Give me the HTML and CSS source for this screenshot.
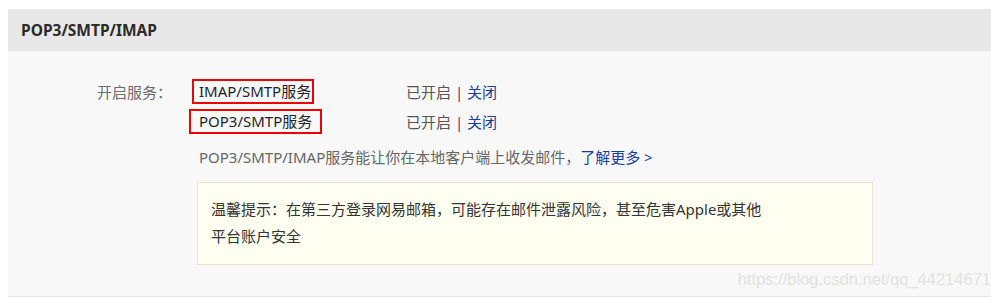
FILE: index.html
```html
<!DOCTYPE html>
<html lang="zh-CN">
<head>
<meta charset="utf-8">
<title>POP3/SMTP/IMAP</title>
<link rel="stylesheet" href="styles.css">
</head>
<body>
<div class="panel">
  <div class="panel-head">POP3/SMTP/IMAP</div>
  <div class="panel-body">
    <div class="row">
      <div class="label">开启服务：</div>
      <div class="service"><span class="svc svc-imap">IMAP/SMTP服务</span></div>
      <div class="status">已开启 <span class="sep">|</span> <a class="link" href="#">关闭</a></div>
    </div>
    <div class="row">
      <div class="label"></div>
      <div class="service"><span class="svc svc-pop">POP3/SMTP服务</span></div>
      <div class="status">已开启 <span class="sep">|</span> <a class="link" href="#">关闭</a></div>
    </div>
    <p class="desc">POP3/SMTP/IMAP服务能让你在本地客户端上收发邮件，<a class="link" href="#">了解更多 &gt;</a></p>
    <div class="tip">
      <p class="tip-text">温馨提示：在第三方登录网易邮箱，可能存在邮件泄露风险，甚至危害Apple或其他平台账户安全</p>
    </div>
  </div>
</div>
<div class="watermark">https://blog.csdn.net/qq_44214671</div>
</body>
</html>
```
FILE: styles.css
```css
html, body {
  overflow: hidden;
}
body {
  margin: 9px 0 0 8px;
  background: #ffffff;
  font-family: "Noto Sans", "Noto Sans CJK SC", sans-serif;
  font-size: 15px;
  color: #333;
  width: 983px;
  position: relative;
  height: 290px;
}
.panel {
  width: 1000px;
  border-bottom: 1px solid #e6e6e6;
}
.panel-head {
  height: 42px;
  line-height: 42px;
  background: #e8e8e8;
  padding-left: 13px;
  font-weight: bold;
  font-size: 15.5px;
  color: #2b2b2b;
}
.panel-body {
  background: #f8f8f8;
  padding: 25px 0 31px 89px;
}
.row {
  display: flex;
  align-items: center;
  height: 30px;
}
.label {
  width: 75px;
  color: #6b6b6b;
  flex: none;
}
.service {
  width: 234px;
  flex: none;
}
.svc {
  display: inline-block;
  border: 2px solid #ee0000;
  height: 21px;
  line-height: 21px;
  color: #1e1e2e;
}
.svc-imap {
  margin-left: 20px;
  padding: 0 1px 0 5px;
}
.svc-pop {
  margin-left: 17px;
  padding: 0 8px 0 8px;
}
.status {
  color: #555;
}
.sep {
  color: #6a3a5c;
}
.link {
  color: #1a3c9e;
  text-decoration: none;
}
.desc {
  margin: 9px 0 0 102px;
  line-height: 25px;
  color: #666;
}
.tip {
  margin: 12px 0 0 100px;
  width: 674px;
  background: #fefff0;
  border: 1px solid #e9e8cc;
  padding: 13px 0 14px 0;
}
.tip-text {
  margin: 0 0 0 13px;
  width: 560px;
  line-height: 27px;
  color: #333;
}
.watermark {
  position: absolute;
  right: 0;
  top: 261px;
  font-family: "Liberation Sans", sans-serif;
  font-size: 16.5px;
  color: #e2e2e2;
  white-space: nowrap;
}
```
